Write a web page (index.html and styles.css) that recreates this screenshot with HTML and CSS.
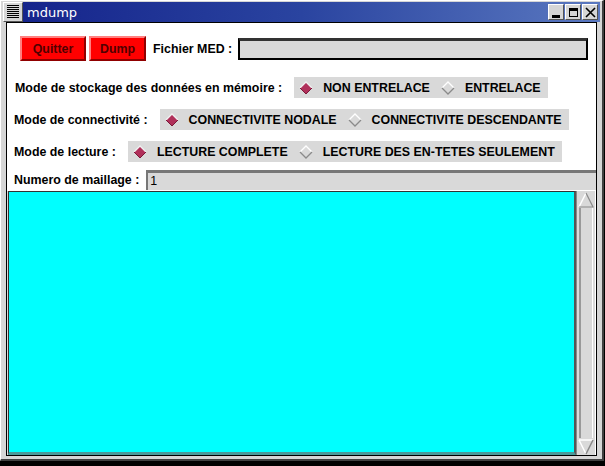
FILE: index.html
```html
<!DOCTYPE html>
<html>
<head>
<meta charset="utf-8">
<link rel="stylesheet" href="styles.css">
</head>
<body>
<div class="window">
  <div class="titlebar">
    <div class="menubox"><span></span><span></span><span></span><span></span><span></span><span></span><span></span></div>
    <div class="title">mdump</div>
    <div class="wbtns">
      <div class="wbtn"><svg width="13" height="13" viewBox="0 0 13 13"><rect x="2" y="9" width="8" height="3" fill="#000"/></svg></div>
      <div class="wbtn"><svg width="13" height="13" viewBox="0 0 13 13"><rect x="2.5" y="2.5" width="8" height="8" fill="none" stroke="#000" stroke-width="1"/><rect x="2" y="2" width="9" height="3" fill="#000"/></svg></div>
      <div class="wbtn"><svg width="13" height="13" viewBox="0 0 13 13"><path d="M2 2 L11 11 M11 2 L2 11" stroke="#000" stroke-width="1.6"/></svg></div>
    </div>
  </div>
  <div class="client">
    <div class="row1">
      <button class="rbtn rbtn-quit">Quitter</button>
      <button class="rbtn rbtn-dump">Dump</button>
      <span class="lbl lbl-fichier">Fichier MED :</span>
      <div class="entry entry-big"></div>
    </div>
    <div class="row row2">
      <span class="lbl">Mode de stockage des données en mémoire :</span>
      <div class="radios">
        <span class="radio"><svg class="dia" width="14" height="14" viewBox="0 0 14 14"><path d="M7 1 L13 7 L7 13 L1 7 Z" fill="#b0305a"/><path d="M1 7 L7 1 L13 7" fill="none" stroke="#f0f0f0" stroke-width="1.3"/><path d="M1 7 L7 13 L13 7" fill="none" stroke="#7a1838" stroke-width="1"/></svg>NON ENTRELACE</span>
        <span class="radio"><svg class="dia" width="14" height="14" viewBox="0 0 14 14"><path d="M7 1 L13 7 L7 13 L1 7 Z" fill="#d9d9d9"/><path d="M1 7 L7 1 L13 7" fill="none" stroke="#ffffff" stroke-width="1.3"/><path d="M1 7 L7 13 L13 7" fill="none" stroke="#8a8a8a" stroke-width="1.3"/></svg>ENTRELACE</span>
      </div>
    </div>
    <div class="row row3">
      <span class="lbl">Mode de connectivité :</span>
      <div class="radios">
        <span class="radio"><svg class="dia" width="14" height="14" viewBox="0 0 14 14"><path d="M7 1 L13 7 L7 13 L1 7 Z" fill="#b0305a"/><path d="M1 7 L7 1 L13 7" fill="none" stroke="#f0f0f0" stroke-width="1.3"/><path d="M1 7 L7 13 L13 7" fill="none" stroke="#7a1838" stroke-width="1"/></svg>CONNECTIVITE NODALE</span>
        <span class="radio"><svg class="dia" width="14" height="14" viewBox="0 0 14 14"><path d="M7 1 L13 7 L7 13 L1 7 Z" fill="#d9d9d9"/><path d="M1 7 L7 1 L13 7" fill="none" stroke="#ffffff" stroke-width="1.3"/><path d="M1 7 L7 13 L13 7" fill="none" stroke="#8a8a8a" stroke-width="1.3"/></svg>CONNECTIVITE DESCENDANTE</span>
      </div>
    </div>
    <div class="row row4">
      <span class="lbl">Mode de lecture :</span>
      <div class="radios">
        <span class="radio"><svg class="dia" width="14" height="14" viewBox="0 0 14 14"><path d="M7 1 L13 7 L7 13 L1 7 Z" fill="#b0305a"/><path d="M1 7 L7 1 L13 7" fill="none" stroke="#f0f0f0" stroke-width="1.3"/><path d="M1 7 L7 13 L13 7" fill="none" stroke="#7a1838" stroke-width="1"/></svg>LECTURE COMPLETE</span>
        <span class="radio"><svg class="dia" width="14" height="14" viewBox="0 0 14 14"><path d="M7 1 L13 7 L7 13 L1 7 Z" fill="#d9d9d9"/><path d="M1 7 L7 1 L13 7" fill="none" stroke="#ffffff" stroke-width="1.3"/><path d="M1 7 L7 13 L13 7" fill="none" stroke="#8a8a8a" stroke-width="1.3"/></svg>LECTURE DES EN-TETES SEULEMENT</span>
      </div>
    </div>
    <div class="row row5">
      <span class="lbl">Numero de maillage :</span>
      <div class="entry entry-num">1</div>
    </div>
    <div class="textzone">
      <div class="text"></div>
      <div class="scroll">
        <div class="arrow"><svg width="16" height="16" viewBox="0 0 16 16"><path d="M8 1 L15 15 L1 15 Z" fill="#d9d9d9"/><path d="M1 15 L8 1" stroke="#ffffff" stroke-width="1.5"/><path d="M8 1 L15 15 L1 15" fill="none" stroke="#8a8a8a" stroke-width="1.2"/></svg></div>
        <div class="trough"></div>
        <div class="arrow"><svg width="16" height="16" viewBox="0 0 16 16"><path d="M1 1 L15 1 L8 15 Z" fill="#d9d9d9"/><path d="M1 1 L15 1 M1 1 L8 15" stroke="#ffffff" stroke-width="1.5"/><path d="M15 1 L8 15" stroke="#8a8a8a" stroke-width="1.5"/></svg></div>
      </div>
    </div>
  </div>
</div>
</body>
</html>
```

FILE: styles.css
```css
* { box-sizing: border-box; }
html, body { margin: 0; padding: 0; }
body {
  width: 605px;
  height: 466px;
  overflow: hidden;
  background: #000;
  font-family: "Liberation Sans", Arial, sans-serif;
}
.window {
  width: 604px;
  height: 461px;
  background: #d6d6d6;
  border-top: 1px solid #ffffff;
  border-left: 1px solid #ffffff;
  border-right: 2px solid #404040;
  border-bottom: 2px solid #404040;
  padding: 1px 2px 3px 2px;
  display: flex;
  flex-direction: column;
}
.titlebar {
  height: 20px;
  flex: none;
  display: flex;
  align-items: center;
  background: linear-gradient(to right, #14228a 0%, #2a44a0 50%, #5a78c0 100%);
}
.menubox {
  width: 20px;
  height: 20px;
  background: #d6d6d6;
  border: 1px solid #fff;
  border-right-color: #555;
  border-bottom-color: #555;
  display: flex;
  flex-direction: column;
  justify-content: center;
  padding: 0 3px;
}
.menubox span { display: block; height: 1px; background: #000; margin-bottom: 1px; }
.title {
  color: #fff;
  font-family: "DejaVu Sans", sans-serif;
  font-size: 13px;
  margin-left: 4px;
  flex: 1;
}
.wbtns { display: flex; gap: 1px; margin-right: 2px; }
.wbtn {
  width: 16px;
  height: 16px;
  background: #d6d6d6;
  border: 1px solid #fff;
  border-right-color: #555;
  border-bottom-color: #555;
  display: flex;
  align-items: center;
  justify-content: center;
}
.client {
  flex: 1;
  background: #fff;
  border: 1px solid #000;
  margin: 0 3px 0 3px;
  display: flex;
  flex-direction: column;
}
.lbl {
  font-weight: bold;
  font-size: 12.4px;
  color: #000;
  white-space: nowrap;
}
.row1 {
  display: flex;
  align-items: center;
  margin-top: 13px;
  padding-left: 13px;
  padding-right: 8px;
  height: 25px;
  flex: none;
}
.rbtn {
  font-family: "Liberation Sans", Arial, sans-serif;
  font-weight: bold;
  font-size: 12.4px;
  color: #500000;
  background: #ff0000;
  border: 2px solid;
  border-color: #ff8080 #900000 #900000 #ff8080;
  height: 25px;
  padding: 0;
  margin-right: 3px;
  cursor: pointer;
}
.rbtn-quit { width: 66px; }
.rbtn-dump { width: 57px; }
.lbl-fichier { margin-left: 4px; margin-right: 6px; }
.entry {
  background: #d9d9d9;
  border-top: 3px solid #777;
  border-left: 2px solid #777;
}
.entry-big {
  flex: 1;
  height: 22px;
  border: 2px solid #000;
  border-top: 3px solid #333;
}
.row {
  display: flex;
  align-items: center;
  flex: none;
}
.row2 { margin-top: 16px; padding-left: 8px; }
.row3 { margin-top: 11px; padding-left: 7px; }
.row4 { margin-top: 11px; padding-left: 7px; }
.row5 { margin-top: 8px; padding-left: 7px; }
.radios {
  display: flex;
  align-items: center;
  background: #d9d9d9;
  height: 21px;
  padding: 0 7px 0 5px;
  margin-left: 12px;
}
.radio {
  display: flex;
  align-items: center;
  font-weight: bold;
  font-size: 12.4px;
  white-space: nowrap;
}
.radio + .radio { margin-left: 11px; }
.dia { margin-right: 10px; }
.entry-num {
  flex: 1;
  height: 20px;
  margin-left: 7px;
  font-size: 12.4px;
  line-height: 16px;
  padding-left: 2px;
}
.textzone {
  flex: 1;
  display: flex;
  margin-top: 1px;
  padding-left: 1px;
  background: #d6d6d6;
}
.text {
  flex: 1;
  background: #00ffff;
  border: 1px solid #333;
  border-right: 2px solid #555;
  border-bottom: 3px solid #4a9a9a;
}
.scroll {
  width: 20px;
  display: flex;
  flex-direction: column;
  background: #d9d9d9;
  border-left: 1px solid #888;
  border-right: 1px solid #fff;
}
.arrow { height: 17px; display: flex; align-items: center; justify-content: center; }
.trough {
  flex: 1;
  margin: 0 2px;
  border-left: 2px solid #999;
  border-right: 1px solid #fff;
  background: #d9d9d9;
}
```
